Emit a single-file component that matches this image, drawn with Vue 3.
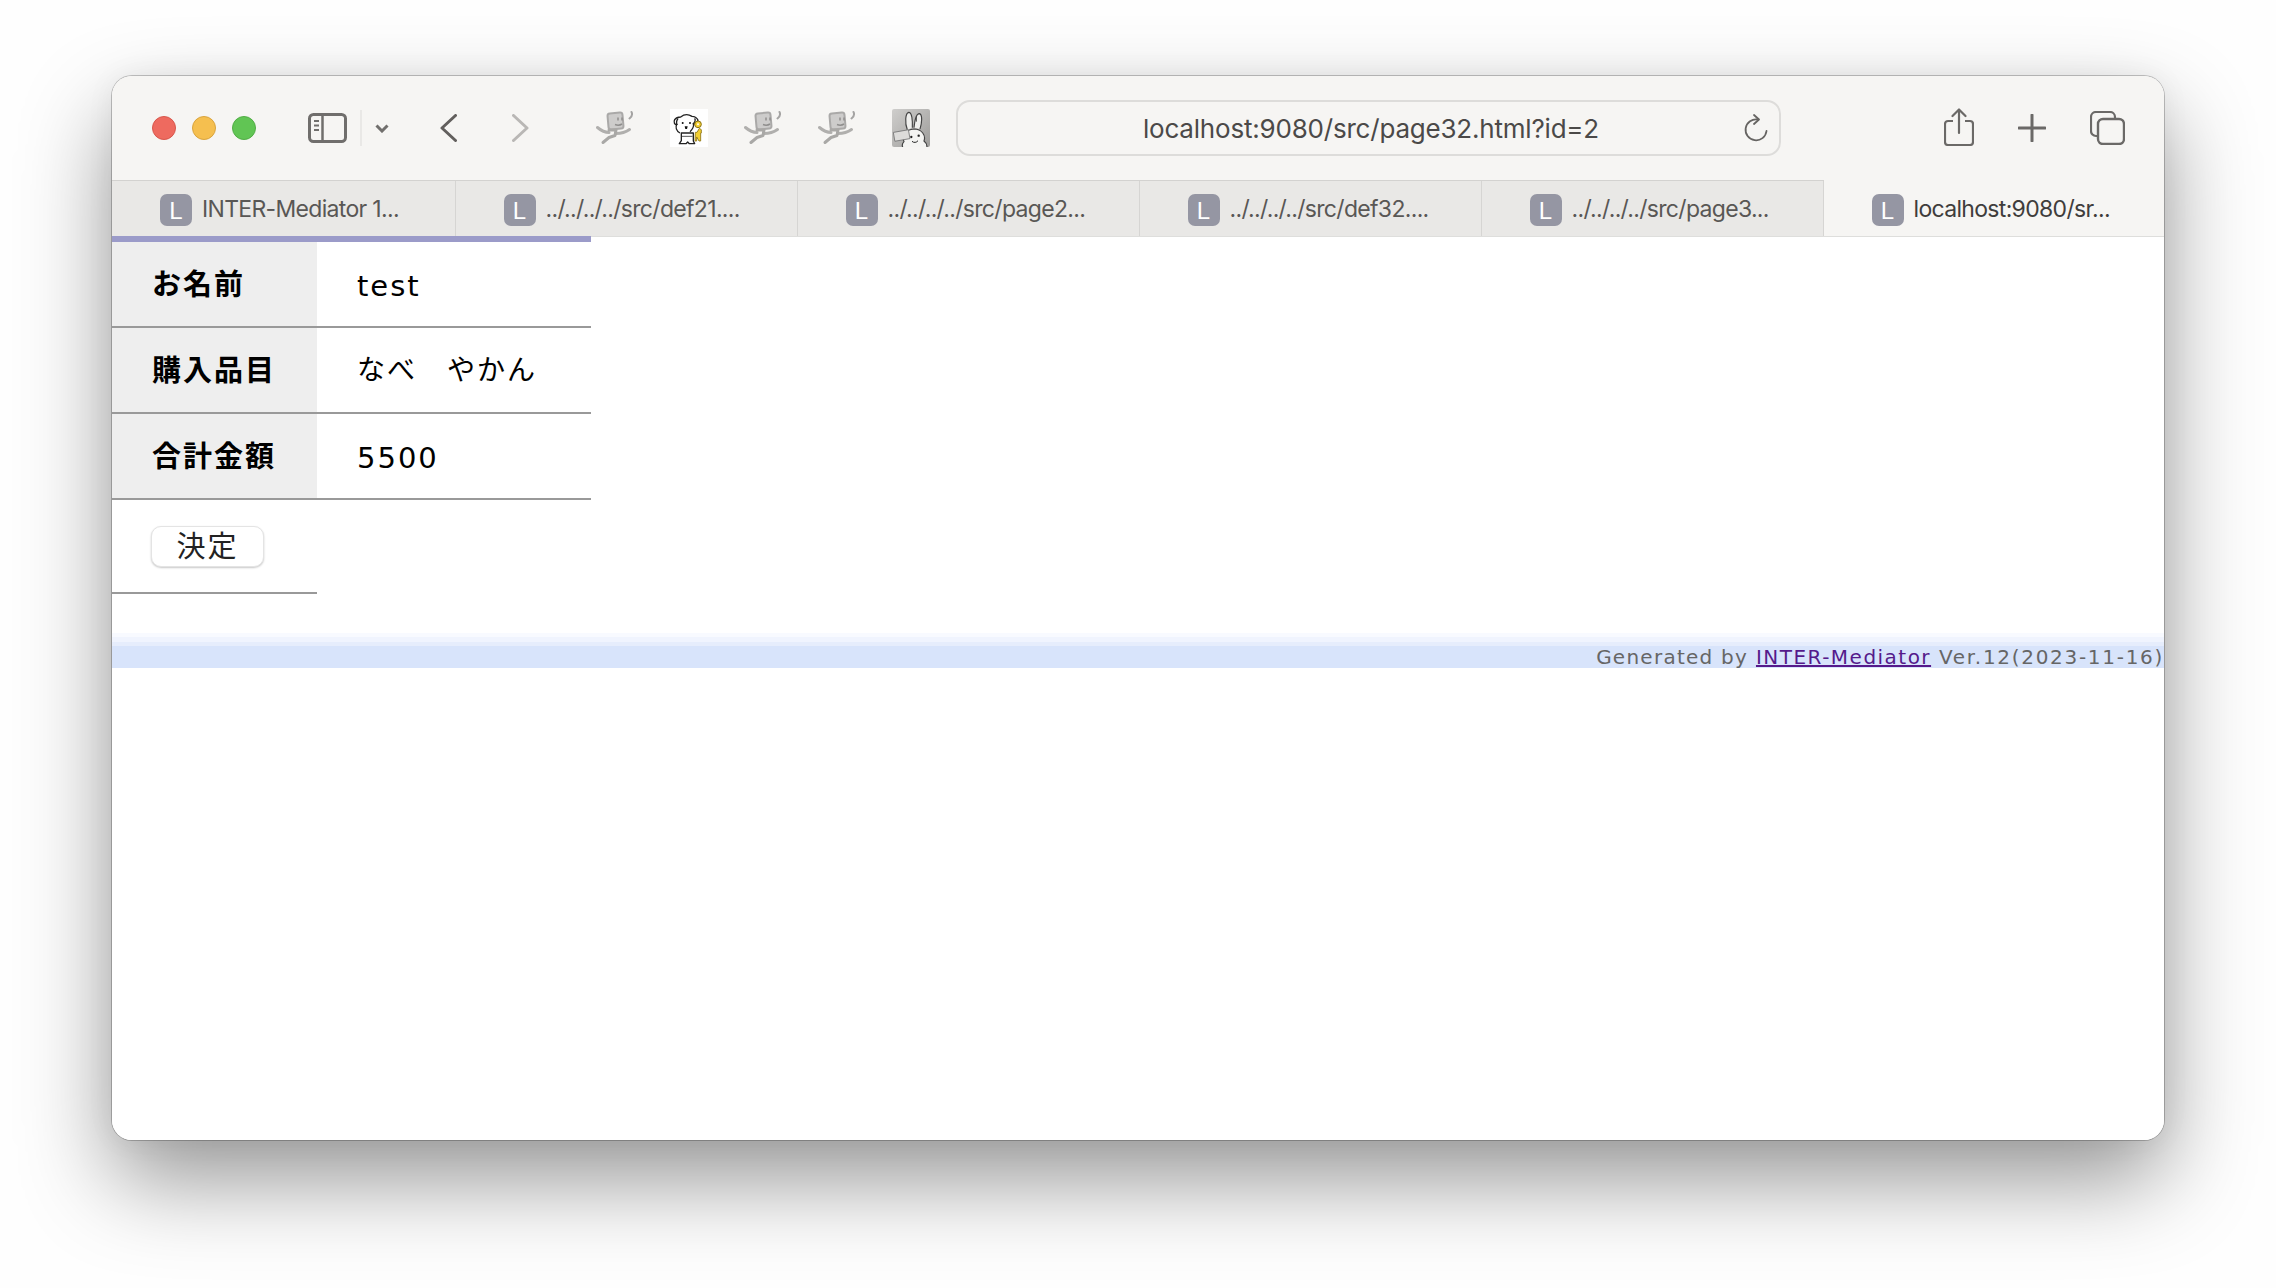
<script setup>
const tabs = [
  { title: 'INTER-Mediator 1...' },
  { title: '../../../../src/def21....' },
  { title: '../../../../src/page2...' },
  { title: '../../../../src/def32....' },
  { title: '../../../../src/page3...' },
  { title: 'localhost:9080/sr...', active: true },
]
const rows = [
  { label: 'お名前', value: 'test' },
  { label: '購入品目', value: 'なべ　やかん', jp: true },
  { label: '合計金額', value: '5500' },
]
</script>

<template>
  <div class="stage">
    <div class="window">
      <header class="toolbar">
        <div class="lights">
          <span class="light red"></span>
          <span class="light yellow"></span>
          <span class="light green"></span>
        </div>
        <svg class="sidebar-icon" width="39" height="30" viewBox="0 0 39 30" fill="none">
          <rect x="1.5" y="1.5" width="36" height="27" rx="4" stroke="#706e6c" stroke-width="3" />
          <path d="M14.5 2v26" stroke="#706e6c" stroke-width="2.5" />
          <path d="M6 8h5M6 12.500h5M6 17h5" stroke="#706e6c" stroke-width="2" />
        </svg>
        <span class="divider"></span>
        <svg class="chev-down" width="14" height="9" viewBox="0 0 14 9" fill="none">
          <path d="M1.500 1.500 7 7l5.500-5.500" stroke="#716f6d" stroke-width="3" />
        </svg>
        <svg class="back" width="17" height="28" viewBox="0 0 17 28" fill="none">
          <path d="M15.500 1.500 2 14l13.500 12.500" stroke="#625f5d" stroke-width="3" stroke-linecap="round" stroke-linejoin="round" />
        </svg>
        <svg class="forward" width="17" height="28" viewBox="0 0 17 28" fill="none">
          <path d="M1.500 1.500 15 14 1.500 26.500" stroke="#b9b7b5" stroke-width="3" stroke-linecap="round" stroke-linejoin="round" />
        </svg>

        <div class="favs">
          <svg class="fav" width="38" height="38" viewBox="0 0 38 38" fill="none"><use href="#robot" /></svg>
          <svg class="fav" width="38" height="38" viewBox="0 0 114 114">
            <rect width="114" height="114" fill="#fff" />
            <path d="M30 72C18 66 16 54 20 46c-6 2-10-6-6-14 4-6 12-8 18-8 10-8 24-8 34-2 8 0 16 6 18 12-2 6-8 10-13 12 0 8-4 16-11 22" fill="#fff" stroke="#222" stroke-width="4" stroke-linejoin="round" />
            <path d="M24 28c-4 6-6 14-2 20M74 28c4 6 0 14-6 18" fill="none" stroke="#222" stroke-width="4" />
            <circle cx="38" cy="42" r="3" fill="#111" /><circle cx="60" cy="42" r="3" fill="#111" />
            <path d="M44 52h9l-2 8h-5z" fill="#111" />
            <path d="M34 72h36v24l4 8H58l-5-5-5 5H28l6-9z" fill="#fff" stroke="#222" stroke-width="4" stroke-linejoin="round" />
            <path d="M36 82h32" stroke="#555" stroke-width="3" />
            <circle cx="84" cy="46" r="10" fill="#f3cf32" stroke="#8a7215" stroke-width="3" />
            <circle cx="84" cy="46" r="3" fill="#fff" />
            <path d="M76 70h5l7-12 6 4v10h-2v24h-5l-7-12v12h-5z" fill="#f3cf32" stroke="#8a7215" stroke-width="2.500" stroke-linejoin="round" />
          </svg>
          <svg class="fav" width="38" height="38" viewBox="0 0 38 38" fill="none"><use href="#robot" /></svg>
          <svg class="fav" width="38" height="38" viewBox="0 0 38 38" fill="none"><use href="#robot" /></svg>
          <svg class="fav" width="38" height="38" viewBox="0 0 114 114">
            <defs>
              <linearGradient id="rabbit-bg" x1="0" y1="0" x2="1" y2="1">
                <stop offset="0" stop-color="#cfcecc" /><stop offset="1" stop-color="#9d9c9a" />
              </linearGradient>
              <clipPath id="rabbit-clip"><rect width="114" height="114" rx="6" /></clipPath>
            </defs>
            <g clip-path="url(#rabbit-clip)">
              <rect width="114" height="114" fill="url(#rabbit-bg)" />
              <path d="M46 62C38 42 40 12 50 10c10 0 12 24 11 46" fill="#efefed" stroke="#444" stroke-width="3.500" />
              <path d="M66 56C68 36 72 14 82 14c10 2 8 28 2 46" fill="#efefed" stroke="#444" stroke-width="3.500" />
              <path d="M73 22v16" stroke="#444" stroke-width="3" />
              <path d="M34 118c-4-6-4-14 2-20-6-14 2-36 30-38 24 0 36 20 30 36 8 6 10 14 8 22z" fill="#f4f4f2" stroke="#444" stroke-width="3.500" />
              <rect x="6" y="66" width="46" height="27" transform="rotate(-10 29 80)" fill="#dddcda" stroke="#777" stroke-width="2.500" />
              <circle cx="58" cy="84" r="3.500" fill="#222" /><circle cx="80" cy="80" r="3.500" fill="#222" />
              <path d="M60 97c5 5 14 4 18-2" stroke="#222" stroke-width="3" fill="none" />
            </g>
          </svg>
          <svg width="0" height="0" class="defs-holder">
            <defs>
              <g id="robot">
                <rect x="12" y="4" width="15" height="16" rx="2.500" transform="rotate(-5 19.500 12)" fill="#cdcccb" stroke="#aaa9a8" stroke-width="2" />
                <path d="M22 8.500v3M26 8.500v3M19 15.500c2.500 1 5 .8 7-.5" stroke="#8f8e8d" stroke-width="1.500" fill="none" />
                <path d="M35.500 3c1 2 .5 4.500-2 6.500" stroke="#a5a4a3" stroke-width="2" fill="none" stroke-linecap="round" />
                <path d="M1.500 18.500C5 21.500 9 23.500 13 23.500M20 24.500c5 0 10-1.500 13.500-4" stroke="#b0afad" stroke-width="3" fill="none" stroke-linecap="round" />
                <path d="M13 21h7l-1 5.500-6 2-6 5" stroke="#a9a8a6" stroke-width="3" fill="none" stroke-linecap="round" stroke-linejoin="round" />
              </g>
            </defs>
          </svg>
        </div>

        <div class="address">
          <span class="url">localhost:9080/src/page32.html?id=2</span>
          <svg class="reload" width="26" height="30" viewBox="0 0 26 30" fill="none">
            <path d="M15 5.500A10.500 10.500 0 1 0 23.500 17" stroke="#666462" stroke-width="1.800" stroke-linecap="round" />
            <path d="M11 1l5 4.500L11 10" stroke="#666462" stroke-width="1.800" stroke-linecap="round" stroke-linejoin="round" />
          </svg>
        </div>

        <svg class="share" width="30" height="38" viewBox="0 0 30 38" fill="none">
          <path d="M9 13H4a3 3 0 0 0-3 3v18a3 3 0 0 0 3 3h22a3 3 0 0 0 3-3V16a3 3 0 0 0-3-3h-5" stroke="#6b6967" stroke-width="2.200" />
          <path d="M15 25V2M8.500 8 15 1.500 21.500 8" stroke="#6b6967" stroke-width="2.200" stroke-linecap="round" stroke-linejoin="round" />
        </svg>
        <svg class="plus" width="28" height="28" viewBox="0 0 28 28" fill="none">
          <path d="M14 1v26M1 14h26" stroke="#6b6967" stroke-width="3" stroke-linecap="round" />
        </svg>
        <svg class="copies" width="35" height="34" viewBox="0 0 35 34" fill="none">
          <path d="M7 25H6a5 5 0 0 1-5-5V6a5 5 0 0 1 5-5h14a5 5 0 0 1 5 5v1" stroke="#6b6967" stroke-width="2.200" />
          <rect x="8" y="8" width="26" height="25" rx="5" stroke="#6b6967" stroke-width="2.400" />
        </svg>
      </header>

      <nav class="tabs">
        <div v-for="tab in tabs" :key="tab.title" class="tab" :class="{ active: tab.active }">
          <span class="tab-icon">L</span>
          <span class="tab-title">{{ tab.title }}</span>
        </div>
      </nav>

      <main class="page">
        <table class="record">
          <tbody>
            <tr v-for="row in rows" :key="row.label">
              <th>{{ row.label }}</th>
              <td :class="{ jp: row.jp }">{{ row.value }}</td>
            </tr>
            <tr class="action-row">
              <th><button class="submit" type="button">決定</button></th>
            </tr>
          </tbody>
        </table>
        <footer class="generated">
          <span class="gen-by">Generated by</span>&nbsp;<a class="im-link" href="#">INTER-Mediator</a>&nbsp;<span class="gen-ver">Ver.12(2023-11-16)</span>
        </footer>
      </main>
    </div>
  </div>
</template>

<style>
html, body { margin: 0; background: #fff; overflow: hidden; }
</style>

<style scoped>
.stage {
  width: 2276px;
  height: 1288px;
  box-sizing: border-box;
  padding: 76px 112px 148px;
  background: #fefefe;
}
.window {
  height: 100%;
  display: flex;
  flex-direction: column;
  border-radius: 20px;
  overflow: hidden;
  background: #fff;
  box-shadow: 0 0 0 1px rgba(0, 0, 0, 0.22), 0 40px 90px rgba(0, 0, 0, 0.41), 0 0 30px rgba(0, 0, 0, 0.05);
}
.toolbar {
  height: 104px;
  flex: none;
  display: flex;
  align-items: center;
  background: #f6f5f3;
  padding-left: 40px;
  box-sizing: border-box;
}
.lights { display: flex; gap: 16px; }
.light { width: 24px; height: 24px; border-radius: 50%; box-sizing: border-box; }
.red { background: #ee6a5f; border: 1px solid #d8574c; }
.yellow { background: #f5bf4f; border: 1px solid #d9a43e; }
.green { background: #61c554; border: 1px solid #52ad46; }
.sidebar-icon { margin-left: 52px; flex: none; }
.divider { width: 2px; height: 36px; background: #e9e8e6; margin-left: 13px; flex: none; }
.chev-down { margin-left: 13px; flex: none; }
.back { margin-left: 51px; flex: none; }
.forward { margin-left: 55px; flex: none; }
.favs { display: flex; gap: 36px; margin-left: 67px; flex: none; }
.fav { display: block; flex: none; }
.defs-holder { position: absolute; }
.address {
  width: 825px;
  height: 56px;
  box-sizing: border-box;
  margin-left: 26px;
  padding: 2px 0 0 5px;
  border: 2px solid #dddcda;
  border-radius: 14px;
  display: flex;
  align-items: center;
  justify-content: center;
  position: relative;
  flex: none;
}
.url {
  font: 26px/1 Inter, "Liberation Sans", sans-serif;
  color: #4b4948;
  letter-spacing: -0.2px;
}
.reload { position: absolute; right: 10px; top: 12px; }
.share { margin-left: 163px; flex: none; margin-top: -2px; }
.plus { margin-left: 44px; flex: none; }
.copies { margin-left: 44px; flex: none; }

.tabs {
  height: 57px;
  flex: none;
  display: flex;
  box-sizing: border-box;
  border-top: 1px solid #d3d2d0;
  border-bottom: 1px solid #dededc;
  background: #e9e8e6;
}
.tab {
  width: 342px;
  flex: none;
  box-sizing: border-box;
  padding: 2px 0 0 48px;
  display: flex;
  align-items: center;
  gap: 10px;
  border-right: 1px solid #d6d5d3;
  font: 23px/1 Inter, "Liberation Sans", sans-serif;
  color: #595755;
}
.tab:first-child { width: 343.5px; }
.tab.active {
  flex: 1;
  background: #f6f5f3;
  border-right: none;
  color: #3f3d3c;
  margin-top: -1px;
  padding-top: 3px;
}
.tab-icon {
  width: 32px;
  height: 32px;
  flex: none;
  border-radius: 7px;
  background: #9596a3;
  color: #fff;
  display: flex;
  align-items: flex-end;
  justify-content: center;
  padding-bottom: 3px;
  box-sizing: border-box;
  font: 500 24px/1 "Liberation Sans", sans-serif;
}
.tab-title { white-space: nowrap; letter-spacing: -0.68px; }

.page { flex: 1; background: #fff; }
.record {
  border-collapse: separate;
  border-spacing: 0;
  border-top: 6px solid #9b9bc9;
  margin-top: -1px;
  position: relative;
  width: 479px;
  font: 29px/1.2 "DejaVu Sans", "Noto Sans CJK JP", sans-serif;
  letter-spacing: 2px;
  color: #000;
}
.record tr { height: 86px; }
.record th {
  width: 205px;
  box-sizing: border-box;
  background: #eee;
  font-family: "Noto Sans CJK JP", sans-serif;
  font-size: 29px;
  font-weight: 700;
  text-align: left;
  padding: 0 0 4px 40px;
  border-bottom: 2px solid #999;
}
.record td {
  box-sizing: border-box;
  padding: 4px 0 0 40px;
  border-bottom: 2px solid #999;
}
.record td.jp { font-size: 28px; padding-top: 1px; }
.record .action-row { height: 94px; }
.record .action-row th { background: #fff; padding: 0 0 0 39px; font-weight: 400; }
.submit {
  display: block;
  width: 113px;
  height: 41px;
  padding: 0 0 4px;
  box-sizing: border-box;
  background: #fff;
  border: 1px solid #e4e4e4;
  border-radius: 10px;
  box-shadow: 0 1px 2px rgba(0, 0, 0, 0.22);
  font: 29px/1 "Noto Sans CJK JP", sans-serif;
  letter-spacing: 2px;
  color: #222;
}
.generated {
  margin-top: 39px;
  height: 35px;
  box-sizing: border-box;
  text-align: right;
  padding: 13px 0 0 0;
  background: linear-gradient(#f8faff 0 4px, #f0f4fe 4px 9px, #e6edfc 9px 13px, #d8e4fb 13px);
  font: 20px/22px "DejaVu Sans", sans-serif;
  letter-spacing: 1.480px;
  color: #666;
  white-space: nowrap;
}
.gen-by { letter-spacing: 1.250px; }
.gen-ver { letter-spacing: 1.700px; }
.im-link { color: #551a8b; text-decoration: underline; text-decoration-thickness: 2px; }
</style>
